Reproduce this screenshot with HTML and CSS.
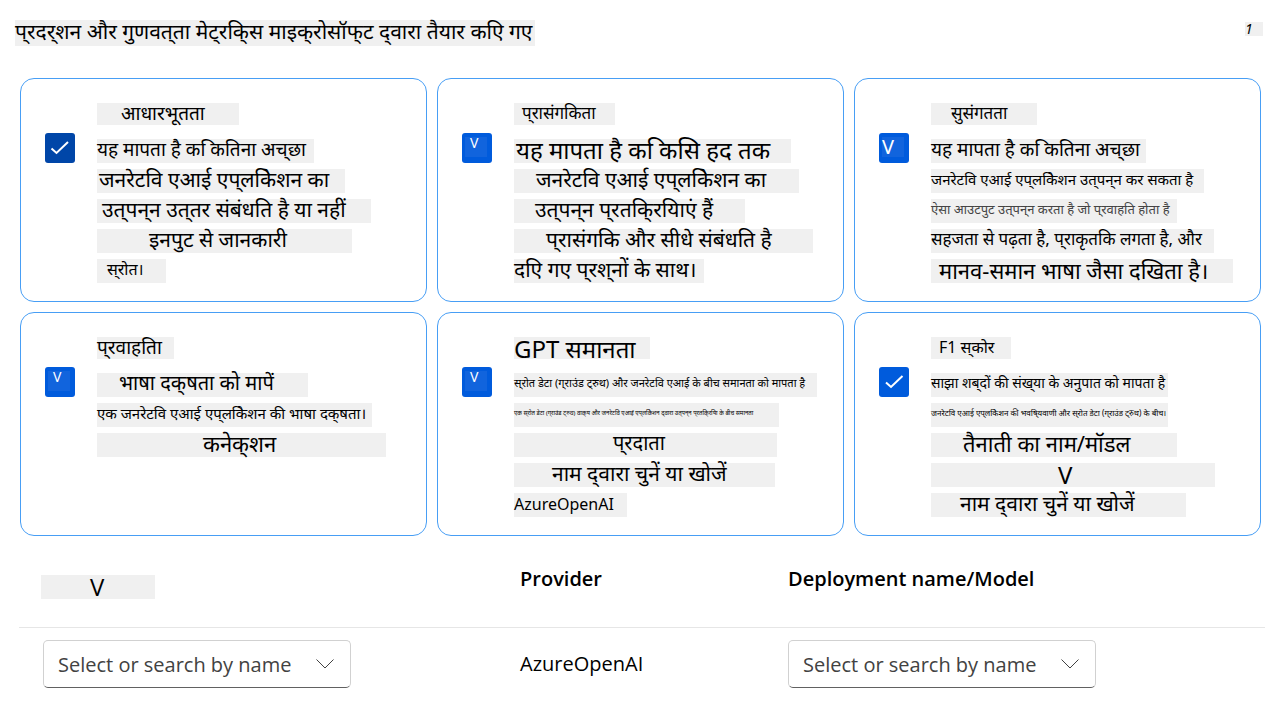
FILE: index.html
```html
<!DOCTYPE html>
<html lang="hi">
<head>
<meta charset="utf-8">
<title>प्रदर्शन और गुणवत्ता मेट्रिक्स</title>
<link rel="stylesheet" href="styles.css">
</head>
<body>
<header class="top">
  <h1 class="heading s21">प्&zwnj;रदर्&zwnj;शन और गुणवत्&zwnj;ता मेट्&zwnj;रकि्&zwnj;स माइक्&zwnj;रोसॉफ्&zwnj;ट द्&zwnj;वारा तैयार कएि गए</h1>
  <span class="page-no">1</span>
</header>
<main>
  <section class="cards">
    <article class="card">
      <span class="tick"><input type="checkbox" class="box box-dark" aria-labelledby="m1" checked><svg class="mark" viewBox="0 0 30 30"><path d="M6.500 15.500l5 4.500L23 9"/></svg></span>
      <div class="lines">
        <h2 id="m1" class="line title s19 a1">आधारभूतता</h2>
        <p class="line s19 a2">यह मापता है क&nbsp;िकतिना अच्&zwnj;छा</p>
        <p class="line s21 a3">जनरेटवि एआई एप्&zwnj;लकिेशन का</p>
        <p class="line s21 a4">उत्&zwnj;पन्&zwnj;न उत्&zwnj;तर संबंधति है या नहीं</p>
        <p class="line s21 a5">इनपुट से जानकारी</p>
        <p class="line s16 a6">स्&zwnj;रोत।</p>
      </div>
    </article>
    <article class="card">
      <span class="tick"><input type="checkbox" class="box" aria-labelledby="m2" checked><span class="vee">V</span></span>
      <div class="lines">
        <h2 id="m2" class="line title s17 b1">प्&zwnj;रासंगकिता</h2>
        <p class="line s24 b2">यह मापता है क&nbsp;िकसि हद तक</p>
        <p class="line s21 b3">जनरेटवि एआई एप्&zwnj;लकिेशन का</p>
        <p class="line s21 b4">उत्&zwnj;पन्&zwnj;न प्&zwnj;रतकि्&zwnj;रयिाएं हैं</p>
        <p class="line s21 b5">प्&zwnj;रासंगकि और सीधे संबंधति है</p>
        <p class="line s21 b6">दएि गए प्&zwnj;रश्&zwnj;नों के साथ।</p>
      </div>
    </article>
    <article class="card">
      <span class="tick"><input type="checkbox" class="box" aria-labelledby="m3" checked><span class="vee vee-large">V</span></span>
      <div class="lines">
        <h2 id="m3" class="line title s17 c1">सुसंगतता</h2>
        <p class="line s19 c2">यह मापता है क&nbsp;िकतिना अच्&zwnj;छा</p>
        <p class="line s15 c3">जनरेटवि एआई एप्&zwnj;लकिेशन उत्&zwnj;पन्&zwnj;न कर सकता है</p>
        <p class="line s13 soft c4">ऐसा आउटपुट उत्&zwnj;पन्&zwnj;न करता है जो प्&zwnj;रवाहति होता है</p>
        <p class="line s17 c5">सहजता से पढ़ता है, प्&zwnj;राकृतकि लगता है, और</p>
        <p class="line s22 c6">मानव-समान भाषा जैसा दखिता है।</p>
      </div>
    </article>
    <article class="card">
      <span class="tick"><input type="checkbox" class="box" aria-labelledby="m4" checked><span class="vee">V</span></span>
      <div class="lines">
        <h2 id="m4" class="line title s19 d1">प्&zwnj;रवाहतिा</h2>
        <p class="line s20 d2">भाषा दक्&zwnj;षता को मापें</p>
        <p class="line s15 d3">एक जनरेटवि एआई एप्&zwnj;लकिेशन की भाषा दक्&zwnj;षता।</p>
        <p class="line s22 d4">कनेक्&zwnj;शन</p>
      </div>
    </article>
    <article class="card">
      <span class="tick"><input type="checkbox" class="box" aria-labelledby="m5" checked><span class="vee">V</span></span>
      <div class="lines">
        <h2 id="m5" class="line title title-large s24 e1">GPT समानता</h2>
        <p class="line s11 e2">स्&zwnj;रोत डेटा (ग्&zwnj;राउंड ट्&zwnj;रुथ) और जनरेटवि एआई के बीच समानता को मापता है</p>
        <p class="line s6 e3">एक स्&zwnj;रोत डेटा (ग्&zwnj;राउंड ट्&zwnj;रुथ) वाक्&zwnj;य और जनरेटवि एआई एप्&zwnj;लकिेशन द्&zwnj;वारा उत्&zwnj;पन्&zwnj;न प्&zwnj;रतकि्&zwnj;रयिा के बीच समानता</p>
        <p class="line s20 e4">प्&zwnj;रदाता</p>
        <p class="line s21 e5">नाम द्&zwnj;वारा चुनें या खोजें</p>
        <p class="line s16 e6">AzureOpenAI</p>
      </div>
    </article>
    <article class="card">
      <span class="tick"><input type="checkbox" class="box" aria-labelledby="m6" checked><svg class="mark" viewBox="0 0 30 30"><path d="M7 15.500l5 4.500L23.500 9"/></svg></span>
      <div class="lines">
        <h2 id="m6" class="line title s16 f1">F1 स्&zwnj;कोर</h2>
        <p class="line s14 f2">साझा शब्&zwnj;दों की संख्&zwnj;या के अनुपात को मापता है</p>
        <p class="line s8 f3">जनरेटवि एआई एप्&zwnj;लकिेशन की भवषि्&zwnj;यवाणी और स्&zwnj;रोत डेटा (ग्&zwnj;राउंड ट्&zwnj;रुथ) के बीच।</p>
        <p class="line s22 f4">तैनाती का नाम/मॉडल</p>
        <p class="line s24 f5">V</p>
        <p class="line s21 f6">नाम द्&zwnj;वारा चुनें या खोजें</p>
      </div>
    </article>
  </section>
  <table class="models">
    <thead>
      <tr><th class="col-name"><span class="line s24 g1">V</span></th><th class="col-provider">Provider</th><th>Deployment name/Model</th></tr>
    </thead>
    <tbody>
      <tr>
        <td><span class="picker"><select class="select" aria-label="Connection"><option>Select or search by name</option></select><svg class="chevron" viewBox="0 0 20 12"><path d="M1.500 1.500L10 10l8.500-8.500"/></svg></span></td>
        <td>AzureOpenAI</td>
        <td><span class="picker"><select class="select" aria-label="Deployment name/Model"><option>Select or search by name</option></select><svg class="chevron" viewBox="0 0 20 12"><path d="M1.500 1.500L10 10l8.500-8.500"/></svg></span></td>
      </tr>
    </tbody>
  </table>
</main>
</body>
</html>
```
FILE: styles.css
```css
* { box-sizing: border-box; }
body { margin: 0; background: #fff; color: #000; font-family: "Noto Sans", "Noto Sans Devanagari", sans-serif; }
h1, h2, p { margin: 0; font-weight: 400; }

.top { display: flex; justify-content: space-between; align-items: flex-start; padding: 20px 25px 0 15px; height: 78px; }
.heading { width: 520px; height: 26px; background: #f0f0f0; line-height: 22px; white-space: nowrap; }
.page-no { width: 18px; margin-top: 2px; background: #f0f0f0; font-size: 14px; font-style: italic; line-height: 14px; }

.cards { display: grid; grid-template-columns: repeat(3, 1fr); gap: 10px; padding: 0 27px 0 20px; }
.card { display: flex; gap: 22px; min-height: 224px; padding: 20px 12px 15px 24px; border: 1px solid #479ef5; border-radius: 14px; }
.tick { display: grid; flex: none; width: 30px; height: 30px; margin-top: 34px; }
.tick > * { grid-area: 1 / 1; }
.box { appearance: none; width: 30px; height: 30px; margin: 0; border-radius: 3px; background: #005bdc; }
.box-dark { background: #0046a8; }
.mark { width: 30px; height: 30px; fill: none; stroke: #fff; stroke-width: 2; pointer-events: none; }
.vee { width: 22px; height: 20px; margin: 4px 0 0 3px; padding-left: 5px; background: #1164dd; color: #fff; font-size: 14px; line-height: 12px; pointer-events: none; }
.vee-large { padding-left: 0; font-size: 20px; line-height: 20px; }

.lines { display: grid; grid-template-rows: 37px; grid-auto-rows: 30px; align-content: start; justify-items: start; align-items: center; min-width: 0; }
.line { height: 24px; background: #f0f0f0; line-height: 20px; white-space: nowrap; }
.lines .title { height: 22px; align-self: start; margin-top: 4px; line-height: 20px; }
.lines .title-large { line-height: 24px; }
.soft { color: #444; }

.s6 { font-size: 6px; }
.s8 { font-size: 8px; }
.s11 { font-size: 11px; }
.s13 { font-size: 13px; }
.s14 { font-size: 14px; }
.s15 { font-size: 15px; }
.s16 { font-size: 16px; }
.s17 { font-size: 17px; }
.s19 { font-size: 19px; }
.s20 { font-size: 20px; }
.s21 { font-size: 21px; }
.s22 { font-size: 22px; }
.s24 { font-size: 24px; }

.a1 { width: 142px; padding-left: 24px; }
.a2 { width: 217px; }
.a3 { width: 248px; padding-left: 2px; }
.a4 { width: 274px; padding-left: 5px; }
.a5 { width: 255px; padding-left: 52px; }
.a6 { width: 69px; padding-left: 10px; }
.b1 { width: 101px; padding-left: 8px; }
.b2 { width: 277px; padding-left: 2px; line-height: 22px; }
.b3 { width: 285px; padding-left: 22px; }
.b4 { width: 231px; padding-left: 21px; }
.b5 { width: 299px; padding-left: 32px; }
.b6 { width: 190px; }
.c1 { width: 106px; padding-left: 20px; }
.c2 { width: 215px; }
.c3 { width: 273px; }
.c4 { width: 246px; }
.c5 { width: 283px; }
.c6 { width: 302px; padding-left: 8px; line-height: 22px; }
.d1 { width: 77px; }
.d2 { width: 211px; padding-left: 22px; }
.d3 { width: 275px; }
.d4 { width: 289px; padding-left: 106px; }
.e1 { width: 136px; }
.e2 { width: 303px; }
.e3 { width: 265px; }
.e4 { width: 263px; padding-left: 99px; }
.e5 { width: 261px; padding-left: 38px; }
.e6 { width: 113px; line-height: 22px; }
.f1 { width: 80px; padding-left: 8px; }
.f2 { width: 237px; }
.f3 { width: 237px; }
.f4 { width: 246px; padding-left: 32px; }
.f5 { width: 284px; padding-left: 127px; line-height: 24px; }
.f6 { width: 255px; padding-left: 29px; }
.g1 { display: block; width: 114px; padding-left: 49px; font-weight: 400; line-height: 24px; }

.models { width: calc(100% - 42px); margin: 0 23px 0 19px; border-collapse: collapse; font-family: "Open Sans", sans-serif; font-size: 20px; line-height: 28px; text-align: left; }
.models th { height: 91px; padding: 0 0 4px; border-bottom: 1px solid #e6e6e6; font-weight: 600; }
.models td { height: 74px; padding: 0; }
.models .col-name { width: 501px; padding: 12px 0 0 22px; }
.models td:first-child { padding-left: 24px; }
.col-provider { width: 268px; }
.picker { display: grid; width: 308px; align-items: center; }
.picker > * { grid-area: 1 / 1; }
.select { appearance: none; width: 100%; height: 48px; padding: 2px 14px 0; border: 1px solid #d1d1d1; border-bottom-color: #616161; border-radius: 5px; background: #fff; color: #424242; font: inherit; }
.chevron { justify-self: end; width: 20px; height: 12px; margin-right: 16px; fill: none; stroke: #424242; pointer-events: none; }
```
